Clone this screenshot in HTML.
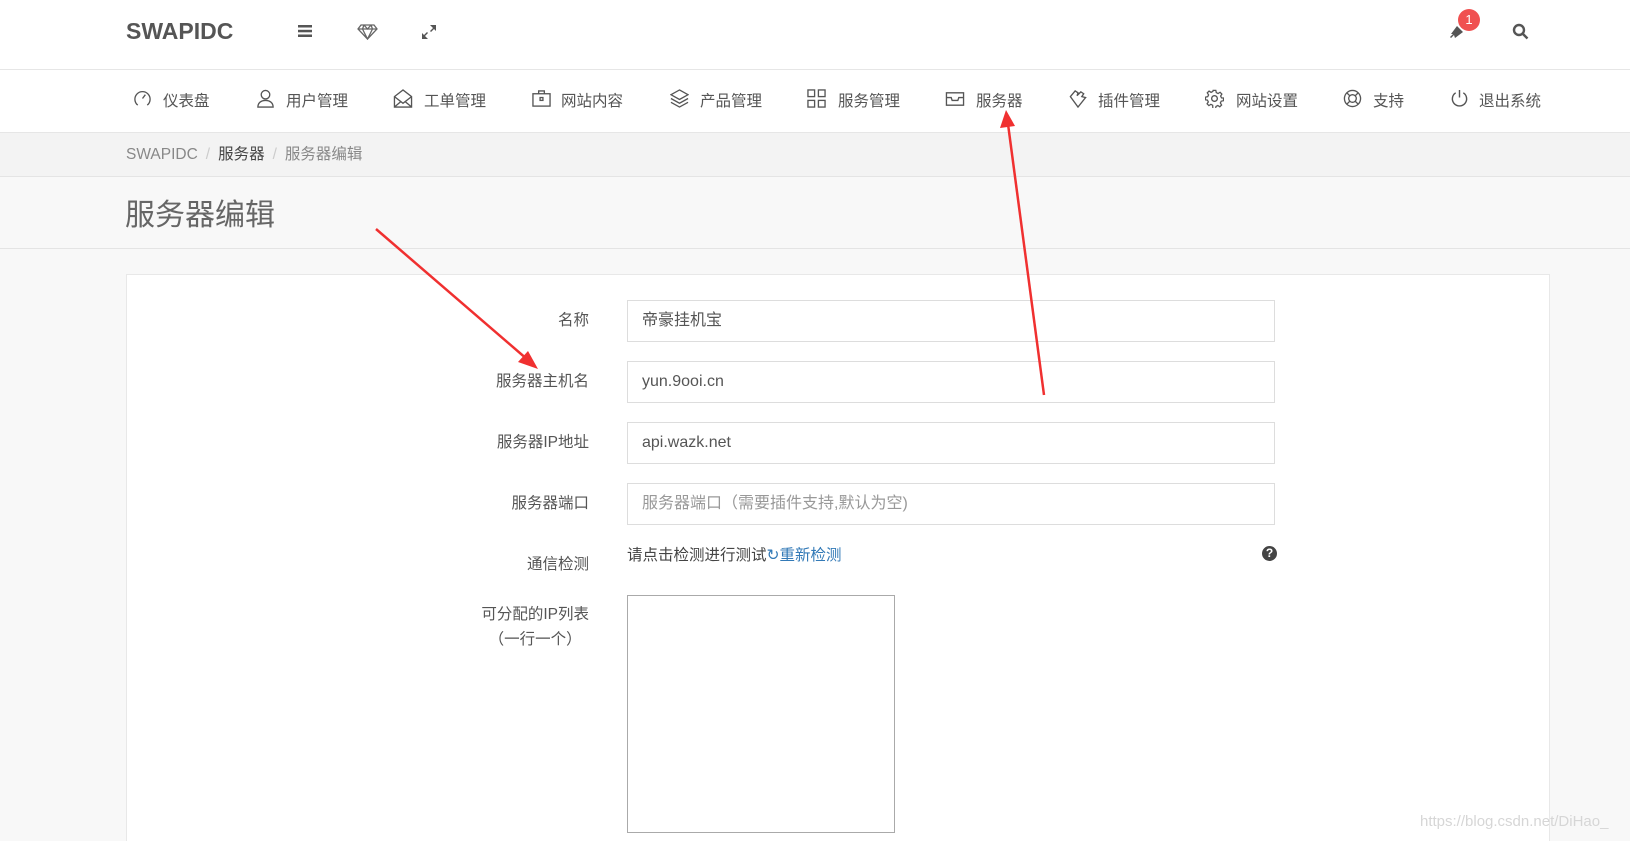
<!DOCTYPE html>
<html style="height:841px;overflow:hidden"><head><meta charset="utf-8"><style>
*{box-sizing:border-box;margin:0;padding:0}
body{width:1630px;height:841px;overflow:hidden;background:#f8f8f8;font-family:"Liberation Sans","Noto Sans CJK SC",sans-serif;color:#555;position:relative}
.hdr{position:absolute;left:0;top:0;width:1630px;height:70px;background:#fff;border-bottom:1px solid #e6e6e6}
.logo{position:absolute;left:126px;top:18px;font-size:23px;font-weight:bold;color:#555}
.nav{position:absolute;left:0;top:70px;width:1630px;height:63px;background:#fff;border-bottom:1px solid #e6e6e6}
.ni{position:absolute;top:20px;font-size:15.5px;color:#555;white-space:nowrap;line-height:24px}
.ic{position:absolute;top:19px}
.bc{position:absolute;left:0;top:133px;width:1630px;height:44px;background:#f3f3f3;border-bottom:1px solid #e4e4e4;font-size:15.5px;color:#888;padding:10px 0 0 126px;line-height:24px}
.bc .s{color:#ccc;margin:0 8px}
.bc .a{color:#444}
.title{position:absolute;left:0;top:177px;width:1630px;height:72px;background:#f8f8f8;border-bottom:1px solid #e4e4e4}
.title h1{position:absolute;left:125px;top:19px;font-size:30px;font-weight:normal;color:#666;line-height:40px}
.panel{position:absolute;left:126px;top:274px;width:1424px;height:567px;background:#fff;border:1px solid #e8e8e8;border-bottom:none}
.lb{position:absolute;right:1041px;font-size:15.5px;color:#555;text-align:right;white-space:nowrap;line-height:24px}
.in{position:absolute;left:627px;width:648px;height:42px;border:1px solid #ddd;background:#fff;font-size:16px;color:#555;padding:0 14px;line-height:40px;white-space:nowrap}
.ph{color:#999}
</style></head><body>
<div class="hdr">
<div class="logo">SWAPIDC</div>
<svg style="position:absolute;left:298px;top:24px" width="15" height="14"><rect y="1" width="14" height="2.5" fill="#555"/><rect y="5.8" width="14" height="2.5" fill="#555"/><rect y="10.5" width="14" height="2.5" fill="#555"/></svg>
<svg style="position:absolute;left:357px;top:24px" width="21" height="16" viewBox="0 0 21 16" fill="none" stroke="#666" stroke-width="1.3"><path d="M4 1h13l3 4-9.5 10L1 5z M1 5h19 M7 1l-1.5 4 5 10 5-10L14 1 M7 1l3.5 4 3.5-4"/></svg>
<svg style="position:absolute;left:421px;top:24px" width="16" height="16" viewBox="0 0 16 16" fill="#555"><path d="M9 1h6v6l-2-2-3 3-1-1 3-3z M7 15H1V9l2 2 3-3 1 1-3 3z"/></svg>
<svg style="position:absolute;left:1449px;top:24px" width="18" height="16" viewBox="0 0 18 16" fill="#555"><path d="M2 10l6-8 6 6-8 6-1-3-3 3-1-1 3-3z"/></svg>
<div style="position:absolute;left:1458px;top:9px;width:22px;height:22px;border-radius:50%;background:#f05050;color:#fff;font-size:13px;text-align:center;line-height:22px">1</div>
<svg style="position:absolute;left:1512px;top:23px" width="17" height="17" viewBox="0 0 17 17" fill="none" stroke="#555" stroke-width="2.4"><circle cx="7" cy="7" r="5"/><path d="M10.5 10.5l5 5"/></svg>
</div>
<div class="nav">
<svg class="ic" style="left:133px" width="19" height="19" viewBox="0 0 20 20" fill="none" stroke="#555" stroke-width="1.4"><path d="M5 17A8 8 0 1 1 15 17"/><path d="M10 10l3-4"/></svg><span class="ni" style="left:163px">仪表盘</span>
<svg class="ic" style="left:256px" width="19" height="19" viewBox="0 0 20 20" fill="none" stroke="#555" stroke-width="1.4"><circle cx="10" cy="6" r="4.5"/><path d="M2 19c0-4 3-7 8-7s8 3 8 7z"/></svg><span class="ni" style="left:286px">用户管理</span>
<svg class="ic" style="left:393px" width="20" height="19" viewBox="0 0 20 20" fill="none" stroke="#555" stroke-width="1.4"><path d="M1 8L10 1l9 7v11H1z M1 8l9 7 9-7 M1 19l7-6 M19 19l-7-6"/></svg><span class="ni" style="left:424px">工单管理</span>
<svg class="ic" style="left:532px" width="19" height="19" viewBox="0 0 20 20" fill="none" stroke="#555" stroke-width="1.4"><rect x="1" y="5" width="18" height="13"/><path d="M7 5V2h6v3"/><rect x="8.5" y="9" width="3" height="3"/></svg><span class="ni" style="left:561px">网站内容</span>
<svg class="ic" style="left:670px" width="19" height="19" viewBox="0 0 20 20" fill="none" stroke="#555" stroke-width="1.4"><path d="M10 1l9 5-9 5-9-5z M1 10l9 5 9-5 M1 14l9 5 9-5"/></svg><span class="ni" style="left:700px">产品管理</span>
<svg class="ic" style="left:807px" width="19" height="19" viewBox="0 0 20 20" fill="none" stroke="#555" stroke-width="1.4"><rect x="1" y="1" width="7" height="7"/><rect x="12" y="1" width="7" height="7"/><rect x="1" y="12" width="7" height="7"/><rect x="12" y="12" width="7" height="7"/></svg><span class="ni" style="left:838px">服务管理</span>
<svg class="ic" style="left:945px" width="20" height="19" viewBox="0 0 20 20" fill="none" stroke="#555" stroke-width="1.4"><path d="M1 4h18v13H1z M1 9h5l1 3h6l1-3h5"/></svg><span class="ni" style="left:976px">服务器</span>
<svg class="ic" style="left:1068px" width="20" height="19" viewBox="0 0 20 20" fill="none" stroke="#555" stroke-width="1.4"><path d="M2 8l5-6 3 2-1 3 4-4 3 2-2 3 4 1-8 10z"/></svg><span class="ni" style="left:1098px">插件管理</span>
<svg class="ic" style="left:1205px" width="19" height="19" viewBox="0 0 20 20" fill="none" stroke="#555" stroke-width="1.4"><circle cx="10" cy="10" r="3"/><path d="M8.5 1h3l.5 2.5 2 1 2.2-1.4 2 2-1.4 2.2 1 2L20 9.5v3l-2.5.5-1 2 1.4 2.2-2 2-2.2-1.4-2 1-.5 2.5h-3L8 17.5l-2-1-2.2 1.4-2-2L3.2 13.8l-1-2L0 11.5v-3l2.5-.5 1-2L2 3.8l2-2L6.2 3.2l2-1z" transform="scale(.95) translate(.5 .5)"/></svg><span class="ni" style="left:1236px">网站设置</span>
<svg class="ic" style="left:1343px" width="19" height="19" viewBox="0 0 20 20" fill="none" stroke="#555" stroke-width="1.4"><circle cx="10" cy="10" r="8.5"/><circle cx="10" cy="10" r="4"/><path d="M4 4l3 3 M16 4l-3 3 M4 16l3-3 M16 16l-3-3"/></svg><span class="ni" style="left:1373px">支持</span>
<svg class="ic" style="left:1450px" width="19" height="19" viewBox="0 0 20 20" fill="none" stroke="#555" stroke-width="1.5"><path d="M6 4a7.5 7.5 0 1 0 8 0 M10 1v8"/></svg><span class="ni" style="left:1479px">退出系统</span>
</div>
<div class="bc">SWAPIDC<span class="s">/</span><span class="a">服务器</span><span class="s">/</span>服务器编辑</div>
<div class="title"><h1>服务器编辑</h1></div>
<div class="panel"></div>
<div class="lb" style="top:309px">名称</div>
<div class="in" style="top:300px">帝豪挂机宝</div>
<div class="lb" style="top:370px">服务器主机名</div>
<div class="in" style="top:361px">yun.9ooi.cn</div>
<div class="lb" style="top:431px">服务器IP地址</div>
<div class="in" style="top:422px">api.wazk.net</div>
<div class="lb" style="top:492px">服务器端口</div>
<div class="in" style="top:483px"><span class="ph">服务器端口（需要插件支持,默认为空)</span></div>
<div class="lb" style="top:553px">通信检测</div>
<div style="position:absolute;left:627px;top:544px;font-size:15.5px;color:#444;line-height:24px;white-space:nowrap">请点击检测进行测试<span style="color:#337ab7">&#x21bb;重新检测</span></div>
<div style="position:absolute;left:1262px;top:546px;width:15px;height:15px;border-radius:50%;background:#444;color:#fff;font-size:12px;font-weight:bold;text-align:center;line-height:15px">?</div>
<div class="lb" style="top:602px;text-align:center;right:1041px;line-height:25px">可分配的IP列表<br>（一行一个）</div>
<div style="position:absolute;left:627px;top:595px;width:268px;height:238px;border:1px solid #aaa;background:#fff"></div>
<svg style="position:absolute;left:0;top:0" width="1630" height="841">
<line x1="376" y1="229" x2="528" y2="360" stroke="#f03030" stroke-width="2.5"/>
<polygon points="538,369 518,362 528,351" fill="#f03030"/>
<line x1="1044" y1="395" x2="1008" y2="124" stroke="#f03030" stroke-width="2.5"/>
<polygon points="1006,110 1000,128 1015,126" fill="#f03030"/>
</svg>
<div style="position:absolute;left:1420px;top:813px;font-size:15px;color:#d6d6d6;white-space:nowrap">https://blog.csdn.net/DiHao_</div>
</body></html>
